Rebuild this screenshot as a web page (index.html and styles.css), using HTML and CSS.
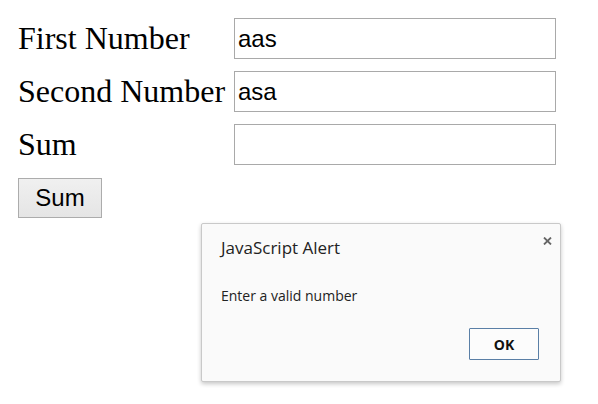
FILE: index.html
```html
<!DOCTYPE html>
<html>
<head>
<meta charset="utf-8">
<link rel="stylesheet" href="styles.css">
</head>
<body>
<div class="page">
  <div class="form">
    <label class="label">First Number</label>
    <input class="field" type="text" value="aas">
    <label class="label">Second Number</label>
    <input class="field" type="text" value="asa">
    <label class="label">Sum</label>
    <input class="field" type="text" value="">
  </div>
  <button class="sum-btn">Sum</button>
</div>
<div class="alert">
  <div class="alert-title">JavaScript Alert</div>
  <svg class="alert-close" width="9" height="8" viewBox="0 0 9 8"><path d="M1 0.5 L8 7.5 M8 0.5 L1 7.5" stroke="#666" stroke-width="1.8" fill="none"/></svg>
  <div class="alert-msg">Enter a valid number</div>
  <div class="alert-actions">
    <button class="ok-btn">OK</button>
  </div>
</div>
</body>
</html>
```
FILE: styles.css
```css
html, body {
  margin: 0;
  padding: 0;
  background: #ffffff;
}
.page {
  padding: 18px 0 0 18px;
}
.form {
  display: grid;
  grid-template-columns: 216px 322px;
  row-gap: 12px;
  align-items: center;
}
.label {
  font-family: "Liberation Serif", "Times New Roman", serif;
  font-size: 32px;
  color: #000;
  white-space: nowrap;
}
.field {
  box-sizing: border-box;
  width: 322px;
  height: 41px;
  margin: 0;
  border: 1px solid #a9a9a9;
  padding: 0 3px;
  font-family: "Liberation Sans", Arial, sans-serif;
  font-size: 24px;
  color: #000;
  background: #fff;
  outline: none;
}
.sum-btn {
  box-sizing: border-box;
  margin-top: 13px;
  width: 84px;
  height: 40px;
  padding: 0;
  border: 1px solid #acacac;
  border-radius: 0;
  background: linear-gradient(#f0f0f0, #e5e5e5);
  font-family: "Liberation Sans", Arial, sans-serif;
  font-size: 24px;
  color: #000;
}
.alert {
  position: absolute;
  left: 201px;
  top: 223px;
  box-sizing: border-box;
  width: 360px;
  height: 159px;
  background: #fafafa;
  border: 1px solid #c9c9c9;
  border-radius: 2px;
  box-shadow: 0 2px 4px rgba(0,0,0,0.22);
  font-family: "Open Sans", "Noto Sans", sans-serif;
  color: #222;
}
.alert-title {
  position: absolute;
  left: 19px;
  top: 12px;
  font-size: 17px;
  color: #222;
}
.alert-close {
  position: absolute;
  left: 341px;
  top: 13px;
}
.alert-msg {
  position: absolute;
  left: 19px;
  top: 62px;
  font-size: 14px;
  color: #222;
}
.alert-actions {
  position: absolute;
  left: 267px;
  top: 104px;
}
.ok-btn {
  box-sizing: border-box;
  width: 70px;
  height: 32px;
  padding: 0;
  border: 1px solid #5a7fa6;
  border-radius: 1px;
  background: #fcfcfc;
  font-family: "Open Sans", "Noto Sans", sans-serif;
  font-size: 14px;
  font-weight: bold;
  color: #111;
}
```
